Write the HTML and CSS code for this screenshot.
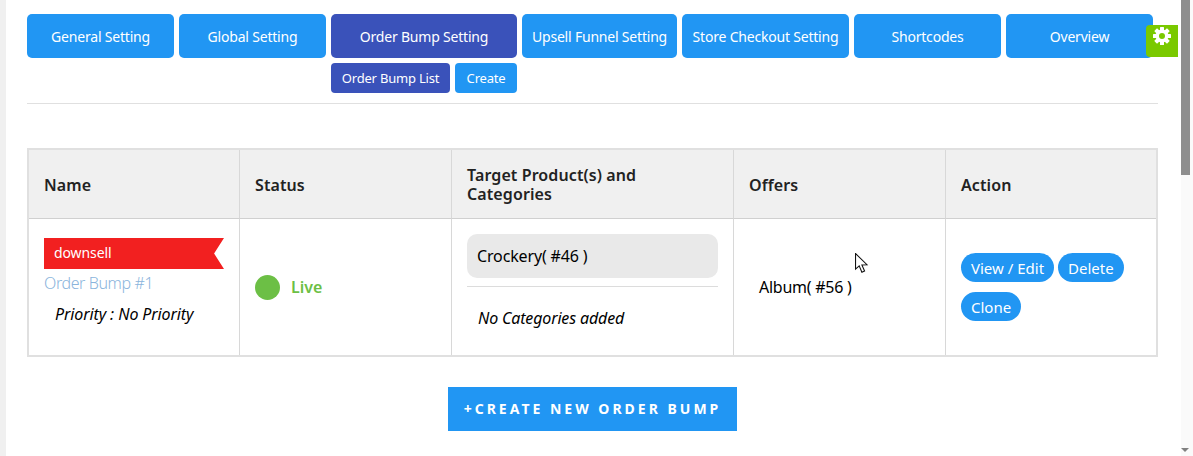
FILE: index.html
```html
<!DOCTYPE html>
<html lang="en">
<head>
    <meta charset="UTF-8">
    <meta name="viewport" content="width=device-width, initial-scale=1.0">
    <title>Order Bump List</title>
    <link rel="stylesheet" href="styles.css">
</head>
<body>
    <div class="page">
        <div class="side-strip"></div>

        <main class="content">
            <nav class="tabs">
                <a class="tab tab-general">General Setting</a>
                <a class="tab tab-global">Global Setting</a>
                <div class="tab-group">
                    <a class="tab tab-active">Order Bump Setting</a>
                    <div class="sub-tabs">
                        <a class="sub-tab sub-tab-active">Order Bump List</a>
                        <a class="sub-tab sub-tab-create">Create</a>
                    </div>
                </div>
                <a class="tab tab-upsell">Upsell Funnel Setting</a>
                <a class="tab tab-store">Store Checkout Setting</a>
                <a class="tab tab-short">Shortcodes</a>
                <a class="tab tab-overview">Overview</a>
            </nav>

            <hr class="divider">

            <table class="bump-table">
                <thead>
                    <tr>
                        <th class="col-name">Name</th>
                        <th class="col-status">Status</th>
                        <th class="col-target">Target Product(s) and Categories</th>
                        <th class="col-offers">Offers</th>
                        <th class="col-action">Action</th>
                    </tr>
                </thead>
                <tbody>
                    <tr>
                        <td>
                            <div class="ribbon">downsell</div>
                            <a class="bump-name">Order Bump #1</a>
                            <p class="priority">Priority : No Priority</p>
                        </td>
                        <td>
                            <div class="status">
                                <span class="status-dot"></span>
                                <span class="status-text">Live</span>
                            </div>
                        </td>
                        <td>
                            <div class="target-pill">Crockery( #46 )</div>
                            <div class="target-line"></div>
                            <p class="no-categories">No Categories added</p>
                        </td>
                        <td class="offer-cell">Album( #56 )</td>
                        <td>
                            <div class="actions">
                                <a class="action-btn">View / Edit</a>
                                <a class="action-btn">Delete</a>
                                <a class="action-btn">Clone</a>
                            </div>
                        </td>
                    </tr>
                </tbody>
            </table>

            <div class="create-row">
                <a class="create-btn">+Create new order bump</a>
            </div>
        </main>

        <div class="scrollbar">
            <div class="scroll-thumb"></div>
            <div class="scroll-arrow"></div>
        </div>
    </div>

    <a class="gear-btn">
        <svg width="18" height="18" viewBox="0 0 18 18">
            <g fill="#fff">
                <rect x="7" y="0" width="4" height="18" rx="0.5"/>
                <rect x="7" y="0" width="4" height="18" rx="0.5" transform="rotate(45 9 9)"/>
                <rect x="7" y="0" width="4" height="18" rx="0.5" transform="rotate(90 9 9)"/>
                <rect x="7" y="0" width="4" height="18" rx="0.5" transform="rotate(135 9 9)"/>
            </g>
            <circle cx="9" cy="9" r="5" fill="none" stroke="#fff" stroke-width="3"/>
            <circle cx="9" cy="9" r="3" fill="#7ac900"/>
        </svg>
    </a>

    <svg class="cursor" width="14" height="21" viewBox="0 0 13 19.5">
        <path d="M0.5 0.5 L0.5 15 L3.9 11.9 L6.4 17.9 L8.9 16.8 L6.4 11.1 L11.1 10.9 Z" fill="#fff" stroke="#111" stroke-width="1"/>
    </svg>
</body>
</html>
```

FILE: styles.css
```css
* {
    box-sizing: border-box;
}

html, body {
    height: 100%;
    margin: 0;
    overflow: hidden;
}

body {
    font-family: "Noto Sans", Arial, sans-serif;
    font-size: 14px;
    background-color: #fff;
    color: #111;
}

.page {
    display: flex;
    height: 456px;
}

.side-strip {
    width: 6px;
    background-color: #f0f0f0;
}

.content {
    width: 1175px;
    padding: 14px 23px 0 21px;
}

/* top tabs */
.tabs {
    display: flex;
    align-items: flex-start;
    gap: 5px;
}

.tab {
    display: flex;
    align-items: center;
    justify-content: center;
    height: 44px;
    border-radius: 5px;
    background-color: #2196f3;
    color: #fff;
    letter-spacing: -0.2px;
    white-space: nowrap;
}

.tab-general, .tab-global, .tab-short, .tab-overview {
    width: 147px;
}

.tab-group {
    width: 186px;
}

.tab-upsell {
    width: 155px;
}

.tab-store {
    width: 167px;
}

.tab-active {
    background-color: #3a52ba;
}

.sub-tabs {
    display: flex;
    gap: 5px;
    margin-top: 5px;
}

.sub-tab {
    display: flex;
    align-items: center;
    justify-content: center;
    height: 30px;
    border-radius: 4px;
    background-color: #2196f3;
    color: #fff;
    font-size: 13px;
    letter-spacing: -0.2px;
}

.sub-tab-active {
    width: 119px;
    background-color: #3a52ba;
}

.sub-tab-create {
    width: 62px;
}

.divider {
    margin: 10px 0 0;
    border: 0;
    border-top: 1px solid #e0e0e0;
    width: 1131px;
}

/* table */
.bump-table {
    width: 1131px;
    margin-top: 44px;
    border-collapse: separate;
    border-spacing: 0;
    table-layout: fixed;
    border: 2px solid #e0e0e0;
}

.bump-table th, .bump-table td {
    padding: 0 15px;
    border-right: 1px solid #d8d8d8;
}

.bump-table th:last-child, .bump-table td:last-child {
    border-right: 0;
}

.bump-table th {
    height: 69px;
    padding-top: 2px;
    border-bottom: 1px solid #d0d0d0;
    background-color: #f0f0f0;
    font-size: 16px;
    font-weight: 600;
    line-height: 19px;
    letter-spacing: 0.1px;
    text-align: left;
    color: #222;
}

.bump-table td {
    height: 136px;
    vertical-align: middle;
}

.col-name {
    width: 211px;
}

.col-status, .col-offers {
    width: 212px;
}

.col-target {
    width: 282px;
}

.col-action {
    width: 210px;
}

.ribbon {
    width: 180px;
    height: 31px;
    padding: 5px 10px;
    background-color: #f22020;
    color: #fff;
    letter-spacing: -0.1px;
    clip-path: polygon(0 0, 100% 0, 94.5% 50%, 100% 100%, 0 100%);
}

.bump-name {
    display: block;
    margin-top: 3px;
    color: #8ab4dc;
    font-size: 16px;
    font-weight: 300;
    letter-spacing: -0.4px;
    line-height: 22px;
}

.priority {
    margin: 9px 0 11px 11px;
    font-style: italic;
    font-size: 16px;
    line-height: 22px;
    letter-spacing: -0.1px;
    color: #000;
}

.status {
    display: flex;
    align-items: center;
    gap: 11px;
}

.status-dot {
    width: 25px;
    height: 25px;
    border-radius: 50%;
    background-color: #6cbf45;
}

.status-text {
    color: #6cbf45;
    font-size: 16px;
    font-weight: 600;
}

.target-pill {
    display: flex;
    align-items: center;
    height: 44px;
    padding: 0 10px;
    border-radius: 10px;
    background-color: #e9e9e9;
    font-size: 16px;
    letter-spacing: -0.15px;
    color: #000;
}

.target-line {
    height: 1px;
    margin-top: 8px;
    background-color: #dcdcdc;
}

.no-categories {
    margin: 20px 0 11px 11px;
    font-style: italic;
    font-size: 16px;
    line-height: 22px;
    letter-spacing: -0.15px;
    color: #000;
}

.bump-table .offer-cell {
    padding-left: 25px;
    font-size: 16px;
    letter-spacing: -0.25px;
    color: #000;
}

.actions {
    display: flex;
    flex-wrap: wrap;
    gap: 10px 4px;
}

.action-btn {
    display: flex;
    align-items: center;
    height: 29px;
    padding: 0 10px;
    border-radius: 15px;
    background-color: #2196f3;
    color: #fff;
    font-size: 15px;
}

/* create button */
.create-row {
    display: flex;
    justify-content: center;
    width: 1131px;
    margin-top: 30px;
}

.create-btn {
    display: flex;
    align-items: center;
    justify-content: center;
    width: 289px;
    height: 44px;
    padding-bottom: 2px;
    background-color: #2196f3;
    color: #fff;
    font-size: 14px;
    font-weight: 700;
    letter-spacing: 3px;
    text-transform: uppercase;
}

/* page scrollbar */
.scrollbar {
    position: relative;
    width: 12px;
    background-color: #fafafa;
}

.scroll-thumb {
    width: 9px;
    height: 175px;
    background-color: #8e8e8e;
}

.scroll-arrow {
    position: absolute;
    bottom: 4px;
    left: 0;
    width: 0;
    height: 0;
    border-left: 4.5px solid transparent;
    border-right: 4.5px solid transparent;
    border-top: 4px solid #808080;
}

/* floating items */
.gear-btn {
    position: absolute;
    top: 25px;
    left: 1146px;
    display: flex;
    justify-content: center;
    width: 32px;
    height: 32px;
    padding-top: 2px;
    border-radius: 4px 0 0 4px;
    background-color: #7ac900;
}

.cursor {
    position: absolute;
    top: 253px;
    left: 855px;
}
```
